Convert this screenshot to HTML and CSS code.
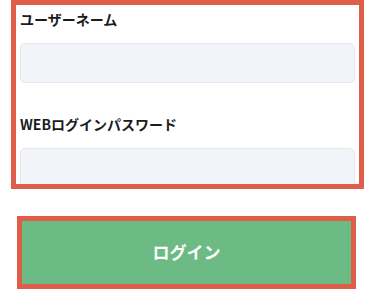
FILE: index.html
```html
<!DOCTYPE html>
<html lang="ja">
<head>
<meta charset="utf-8">
<link rel="stylesheet" href="styles.css">
</head>
<body>
  <div class="panel">
    <div class="field">
      <div class="label">ユーザーネーム</div>
      <div class="input"></div>
    </div>
    <div class="field">
      <div class="label">WEBログインパスワード</div>
      <div class="input"></div>
    </div>
  </div>
  <div class="btn-wrap">
    <button class="btn">ログイン</button>
  </div>
</body>
</html>
```
FILE: styles.css
```css
html, body {
  margin: 0;
  padding: 0;
  background: #ffffff;
  font-family: "Noto Sans CJK JP", "Noto Sans", sans-serif;
}
.panel {
  box-sizing: border-box;
  margin-left: 11px;
  width: 353px;
  height: 189px;
  border: 5px solid #de5e49;
  padding: 4px 4px 0 4px;
  overflow: hidden;
}
.field {
  display: flex;
  flex-direction: column;
  margin-bottom: 31px;
}
.label {
  font-size: 14px;
  line-height: 20px;
  font-weight: 700;
  color: #1b1b1b;
  margin-bottom: 14px;
}
.input {
  box-sizing: border-box;
  height: 40px;
  background: #f3f4f9;
  border: 1px solid #e4e7ef;
  border-radius: 5px;
}
.btn-wrap {
  margin-top: 27px;
  margin-left: 17px;
}
.btn {
  box-sizing: border-box;
  width: 339px;
  height: 73px;
  border: 5px solid #de5e49;
  background: #6cbb84;
  color: #ffffff;
  font-family: "Noto Sans CJK JP", "Noto Sans", sans-serif;
  font-size: 17px;
  font-weight: 700;
  display: flex;
  align-items: center;
  justify-content: center;
  padding: 0 0 3px 0;
}
```
